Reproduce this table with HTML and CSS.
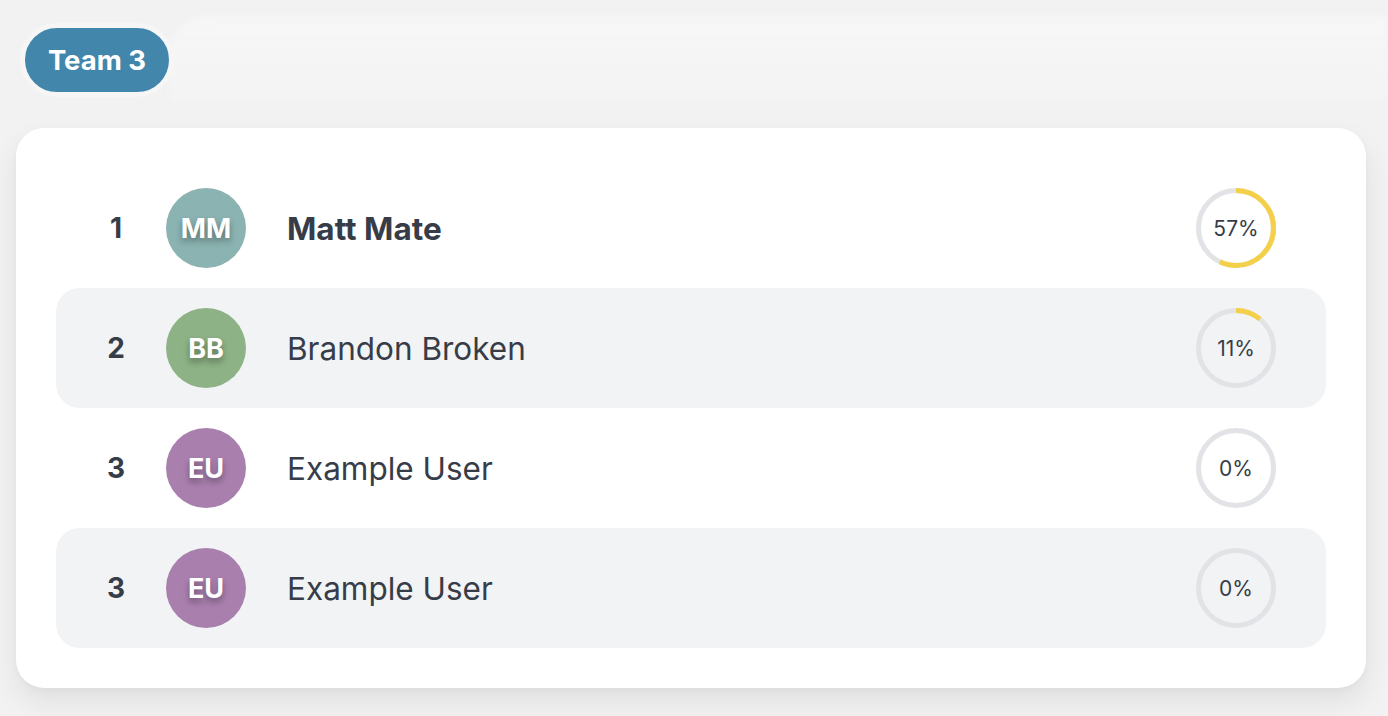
FILE: index.html
```html
<!DOCTYPE html>
<html>
<head>
<meta charset="utf-8">
<link rel="stylesheet" href="styles.css">
</head>
<body>
<div class="page">
  <div class="tabs">
    <div class="team-pill">Team 3</div>
    <div class="tab-ghost"></div>
  </div>
  <div class="card">
    <div class="row">
      <div class="rank">1</div>
      <div class="avatar av-mm">MM</div>
      <div class="name bold">Matt Mate</div>
      <div class="ring">
        <svg width="80" height="80" viewBox="0 0 80 80">
          <circle cx="40" cy="40" r="37.5" class="track"/>
          <circle cx="40" cy="40" r="37.5" class="bar" style="stroke-dasharray: 134.3 235.6"/>
        </svg>
        <span>57%</span>
      </div>
    </div>
    <div class="row alt">
      <div class="rank">2</div>
      <div class="avatar av-bb">BB</div>
      <div class="name">Brandon Broken</div>
      <div class="ring">
        <svg width="80" height="80" viewBox="0 0 80 80">
          <circle cx="40" cy="40" r="37.5" class="track"/>
          <circle cx="40" cy="40" r="37.5" class="bar" style="stroke-dasharray: 25.9 235.6"/>
        </svg>
        <span>11%</span>
      </div>
    </div>
    <div class="row">
      <div class="rank">3</div>
      <div class="avatar av-eu">EU</div>
      <div class="name">Example User</div>
      <div class="ring">
        <svg width="80" height="80" viewBox="0 0 80 80">
          <circle cx="40" cy="40" r="37.5" class="track"/>
        </svg>
        <span>0%</span>
      </div>
    </div>
    <div class="row alt">
      <div class="rank">3</div>
      <div class="avatar av-eu">EU</div>
      <div class="name">Example User</div>
      <div class="ring">
        <svg width="80" height="80" viewBox="0 0 80 80">
          <circle cx="40" cy="40" r="37.5" class="track"/>
        </svg>
        <span>0%</span>
      </div>
    </div>
  </div>
</div>
</body>
</html>
```

FILE: styles.css
```css
* { box-sizing: border-box; }
html, body { margin: 0; padding: 0; }
body {
  background: #f2f2f2;
  font-family: Inter, "Noto Sans", sans-serif;
  color: #373d48;
  width: 1388px;
  height: 716px;
  overflow: hidden;
}
.page {
  padding: 20px 0 0 16px;
}
.tabs {
  display: flex;
  align-items: center;
  height: 80px;
  padding-left: 4px;
}
.team-pill {
  background: #4386ab;
  color: #fff;
  font-weight: 700;
  font-size: 27.5px;
  height: 74px;
  width: 154px;
  border-radius: 37px;
  border: 5px solid #f6f6f6;
  display: flex;
  align-items: center;
  justify-content: center;
  position: relative;
  z-index: 1;
}
.tab-ghost {
  flex: 1;
  height: 86px;
  margin-top: -2px;
  border-radius: 40px 0 0 0;
  background: linear-gradient(180deg, rgba(247,247,247,0.9), rgba(244,244,244,0.7));
  filter: blur(3px);
  margin-left: -6px;
}
.card {
  margin-top: 28px;
  margin-right: 22px;
  background: #fff;
  border-radius: 28px;
  padding: 40px;
  box-shadow: 0 14px 30px rgba(0,0,0,0.08), 0 2px 6px rgba(0,0,0,0.03);
}
.row {
  display: flex;
  align-items: center;
  height: 120px;
  padding: 0 50px 0 40px;
  border-radius: 24px;
}
.row.alt { background: #f2f3f5; }
.rank {
  width: 40px;
  text-align: center;
  font-weight: 700;
  font-size: 28px;
  margin-right: 30px;
}
.avatar {
  width: 80px;
  height: 80px;
  border-radius: 50%;
  color: #fff;
  font-weight: 700;
  font-size: 27px;
  display: flex;
  align-items: center;
  justify-content: center;
  text-shadow: 0 4px 6px rgba(0,0,0,0.35);
  margin-right: 41px;
}
.av-mm { background: #8bb3b1; }
.av-bb { background: #8cb285; }
.av-eu { background: #a97fae; }
.name {
  flex: 1;
  font-size: 31.5px;
  font-weight: 400;
}
.name.bold { font-weight: 700; }
.ring {
  position: relative;
  width: 80px;
  height: 80px;
}
.ring svg { display: block; transform: rotate(-90deg); }
.ring circle { fill: none; stroke-width: 5; }
.ring .track { stroke: #e2e3e6; }
.ring .bar { stroke: #f4d04a; }
.ring span {
  position: absolute;
  inset: 0;
  display: flex;
  align-items: center;
  justify-content: center;
  font-size: 21px;
  color: #373d48;
}
```
